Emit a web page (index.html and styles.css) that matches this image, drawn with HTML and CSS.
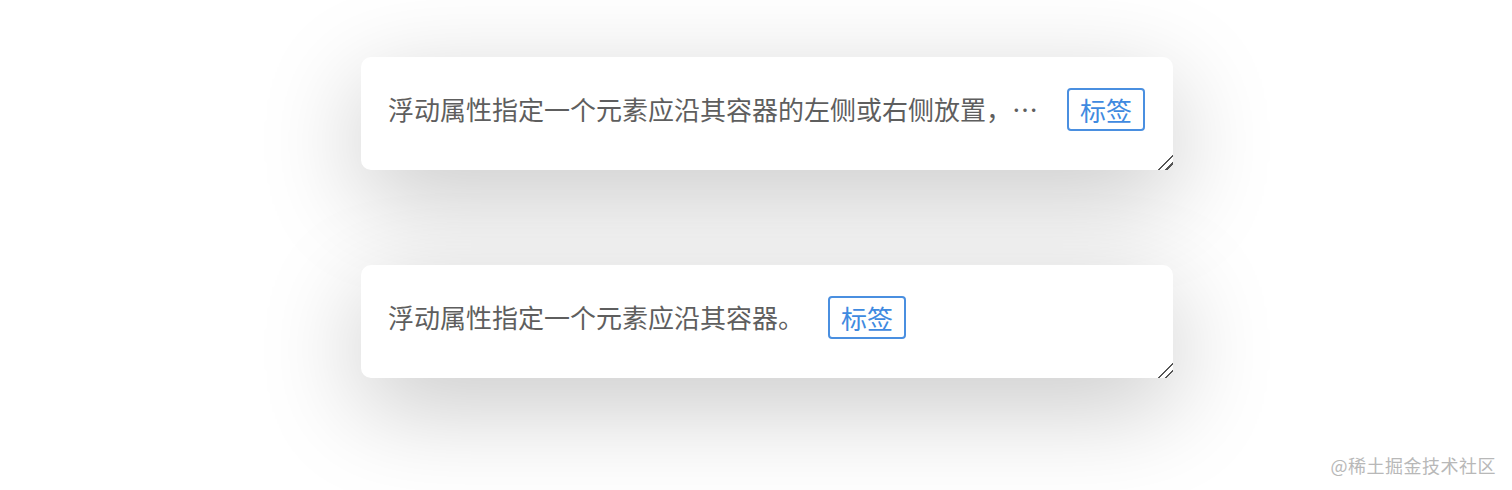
FILE: index.html
```html
<!DOCTYPE html>
<html lang="zh">
<head>
<meta charset="utf-8">
<title>浮动标签</title>
<link rel="stylesheet" href="styles.css">
</head>
<body>
<main class="stage">
  <div class="card">
    <p class="text">浮动属性指定一个元素应沿其容器的左侧或右侧放置，允许文本和内联元素环绕它。</p>
    <span class="tag">标签</span>
  </div>
  <div class="card">
    <p class="text">浮动属性指定一个元素应沿其容器。</p>
    <span class="tag">标签</span>
  </div>
</main>
<div class="watermark">@稀土掘金技术社区</div>
</body>
</html>
```
FILE: styles.css
```css
html, body {
  margin: 0;
  padding: 0;
  background: #ffffff;
  width: 1512px;
  height: 490px;
  overflow: hidden;
  font-family: "Noto Sans CJK SC", "Noto Sans", sans-serif;
}
.stage {
  display: flex;
  flex-direction: column;
  gap: 95px;
  padding: 57px 0 0 361px;
}
.card {
  box-sizing: border-box;
  width: 812px;
  height: 113px;
  padding: 31px 28px 0 27px;
  background: #ffffff;
  border-radius: 10px;
  box-shadow: 0 28px 100px rgba(0, 0, 0, 0.22);
  display: flex;
  align-items: flex-start;
  resize: both;
  overflow: hidden;
}
.card::-webkit-resizer {
  background: linear-gradient(135deg,
    transparent 48%, #555 48%, #555 56%, transparent 56%,
    transparent 72%, #555 72%, #555 80%, transparent 80%);
}
.text {
  margin: 0;
  flex: 0 1 auto;
  min-width: 0;
  white-space: nowrap;
  overflow: hidden;
  text-overflow: ellipsis;
  font-size: 26px;
  line-height: 42px;
  color: #5e5e5e;
}
.tag {
  flex: 0 0 auto;
  margin-left: 24px;
  box-sizing: border-box;
  height: 43px;
  padding: 0 11px;
  border: 2px solid #4a8fe0;
  border-radius: 4px;
  color: #3f8ae0;
  font-size: 26px;
  line-height: 39px;
}
.watermark {
  position: absolute;
  right: 16px;
  bottom: 12px;
  font-size: 18px;
  color: #b8b8b8;
  letter-spacing: 0.5px;
}
```
